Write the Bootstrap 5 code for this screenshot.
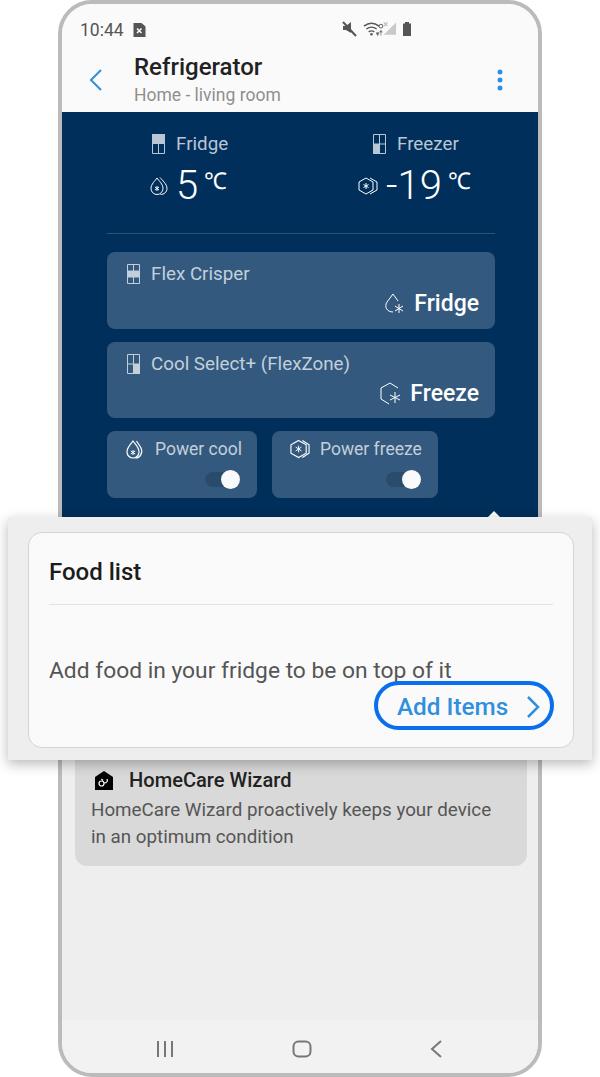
<!DOCTYPE html>
<html lang="en">
<head>
<meta charset="UTF-8">
<meta name="viewport" content="width=device-width, initial-scale=1.0">
<title>Refrigerator</title>
<link href="https://cdn.jsdelivr.net/npm/bootstrap@5.3.2/dist/css/bootstrap.min.css" rel="stylesheet">
<style>
html, body { margin: 0; height: 1077px; overflow: hidden; background: #fff; font-family: Roboto, "Liberation Sans", sans-serif; }
.stage { position: relative; width: 600px; height: 1077px; overflow: hidden; }
.phone { width: 484px; height: 1077px; margin-left: 58px; border: 4px solid #bbb; border-radius: 34px; background: #eee; overflow: hidden; }
.phone > * { flex-shrink: 0; }
.phone svg { flex-shrink: 0; }
.status-bar { height: 46px; padding: 16px 0 0 18px; background: #fafafa; color: #555; font-size: 17.500px; line-height: 20px; }
.sim-icon { margin: 3px 0 0 9px; }
.status-icons { margin: 1px 0 0 196px; gap: 5px; }
.app-bar { height: 62px; background: #fafafa; padding-left: 26px; }
.app-title { font-size: 24px; font-weight: 500; line-height: 26px; color: #222; margin-top: 4px; }
.app-sub { font-size: 17.500px; line-height: 22px; color: #8f8f8f; margin-top: 4px; }
.back-col { width: 46px; padding-top: 17px; }
.more-dots { margin: 18px 34px 0 0; }
.fridge-panel { height: 418px; background: #002f5b; padding: 0 43px 0 45px; }
.temp-row { height: 122px; border-bottom: 1px solid #2b5279; padding-top: 20px; }
.temp-col-a { width: 50%; padding-left: 45px; }
.temp-col-b { width: 50%; padding-left: 72px; }
.temp-label { font-size: 18.800px; line-height: 24px; color: #b9c6d3; gap: 11px; }
.temp-val { color: #fff; font-size: 40px; line-height: 48px; font-weight: 300; margin-top: 6px; }
.temp-val-a { margin-left: -2px; }
.temp-val-b { margin-left: -15px; }
.temp-val svg { margin-right: 8px; }
.temp-unit { font-size: 23px; line-height: 28px; align-self: flex-start; margin: 6px 0 0 6px; font-weight: 300; }
.zone-tile { height: 77px; margin-top: 13px; background: #335a7e; border-radius: 8px; padding: 10px 16px 0 20px; }
.zone-tile-first { margin-top: 18px; }
.zone-tile-short { height: 76px; }
.tile-label { font-size: 18.800px; line-height: 24px; color: #c3cfda; gap: 11px; white-space: nowrap; }
.tile-value { font-size: 23px; font-weight: 500; line-height: 28px; color: #fff; margin-top: 4px; gap: 10px; }
.tile-value-tight { gap: 8px; }
.power-row { gap: 15px; margin-top: 13px; }
.power-tile { height: 67px; background: #335a7e; border-radius: 8px; padding: 6px 10px 0 18px; }
.power-tile .tile-label { gap: 10px; font-size: 17.500px; }
.power-a { width: 150px; }
.power-b { width: 166px; }
.toggle-track { width: 35px; height: 15px; margin: 11px 7px 0 auto; border-radius: 8px; background: #2a4c6c; position: relative; }
.toggle-knob { position: absolute; right: 0; top: -2px; width: 19px; height: 19px; border-radius: 50%; background: #fafafa; }
.wizard-card { height: 126px; margin: 210px 11px 0 13px; background: #d9d9d9; border-radius: 0 0 12px 12px; padding: 27px 16px 0 16px; }
.wizard-title { font-size: 20.100px; line-height: 26px; font-weight: 500; color: #222; gap: 16px; padding-left: 4px; }
.wizard-text { font-size: 18.800px; line-height: 27px; color: #555; margin-top: 4px; }
.bottom-nav { height: 53px; margin-top: 154px; padding-top: 5px; background: #f2f2f2; gap: 118px; }
.overlay-box { position: absolute; left: 8px; top: 517px; width: 584px; height: 243px; background: #eee; box-shadow: 0 4px 12px rgba(0,0,0,.28); padding: 15px 18px 0 20px; }
.food-card { height: 216px; background: #fafafa; border: 1px solid #d4d4d4; border-radius: 14px; padding: 20px 20px 0 20px; position: relative; }
.food-title { font-size: 24px; line-height: 38px; font-weight: 500; color: #1c1c1c; padding-bottom: 13px; border-bottom: 1px solid #e2e2e2; }
.food-text { font-size: 22.800px; line-height: 30px; color: #555; margin-top: 51px; }
.add-pill { position: absolute; left: 345px; top: 148px; width: 180px; height: 49px; border: 4px solid #0a6fec; border-radius: 25px; padding: 3px 0 0 19px; font-size: 24.300px; font-weight: 500; color: #3090dd; gap: 18px; }
.peek { position: absolute; left: 487px; top: 511px; }
</style>
</head>
<body>
<div class="stage">
  <div class="phone d-flex flex-column">
    <div class="status-bar d-flex">
      <span>10:44</span>
      <svg class="sim-icon" width="13" height="14" viewBox="0 0 12 14"><path d="M0 0h8l4 3.500V14H0z" fill="#555"/><path d="M3.500 5.500l4.500 4.500M8 5.500L3.500 10" stroke="#fafafa" stroke-width="1.600"/></svg>
      <div class="status-icons d-flex align-items-start">
        <svg width="16" height="16" viewBox="0 0 16 16"><path d="M1 5h3l5-4v11l-5-3H1z" fill="#555"/><path d="M1 1l13 14" stroke="#555" stroke-width="2"/></svg>
        <svg width="34" height="16" viewBox="0 0 36 16"><path d="M1 5q8-6 16 0M3.500 8q5.500-4 11 0M6 11q3-2 6 0" fill="none" stroke="#555" stroke-width="1.500"/><circle cx="9" cy="13.500" r="1.300" fill="#555"/><path d="M14 12h3l-1.500 3zM19 15v-5M17.500 11.500l1.500-2 1.500 2" fill="#555" stroke="#777" stroke-width=".8"/><circle cx="19" cy="5" r="2" fill="none" stroke="#555"/><path d="M22 1l4 4M26 1l-4 4" stroke="#bbb" stroke-width="1.300"/><path d="M35 1v13H22z" fill="#c9c9c9"/></svg>
        <svg width="10" height="16" viewBox="0 0 10 16"><path d="M3 1h4v1.500h2V15H1V2.500h2z" fill="#555"/></svg>
      </div>
    </div>
    <div class="app-bar d-flex">
      <div class="back-col">
        <svg width="16" height="24" viewBox="0 0 16 24"><path d="M13 2L3 12l10 10" fill="none" stroke="#2f8fdf" stroke-width="2"/></svg>
      </div>
      <div class="flex-grow-1">
        <div class="app-title">Refrigerator</div>
        <div class="app-sub">Home - living room</div>
      </div>
      <svg class="more-dots" width="8" height="24" viewBox="0 0 8 24"><circle cx="4" cy="4" r="2.500" fill="#2f8fdf"/><circle cx="4" cy="12" r="2.500" fill="#2f8fdf"/><circle cx="4" cy="20" r="2.500" fill="#2f8fdf"/></svg>
    </div>

    <div class="fridge-panel">
      <div class="temp-row d-flex">
        <div class="temp-col-a">
          <div class="temp-label d-flex align-items-center">
            <svg width="13" height="20" viewBox="0 0 13 20"><path d="M.5.500h12v19H.5z" fill="none" stroke="#b9c6d3"/><path d="M0 0h13v10H0z" fill="#b9c6d3"/><path d="M6.500 10v10" stroke="#b9c6d3"/></svg>
            <span>Fridge</span>
          </div>
          <div class="temp-val temp-val-a d-flex align-items-center">
            <svg width="18" height="20" viewBox="0 0 18 20"><path d="M7 2C5 5 1 8 1 12.500a6 6 0 0 0 12 0C13 8 9 5 7 2z" fill="none" stroke="#fff"/><path d="M10 1.500C12 4 17 8 17 12.500c0 3.500-3 6-6.500 6" fill="none" stroke="#fff"/><path d="M7 10v5M5 11l4 3M9 11l-4 3" stroke="#fff"/></svg>
            <span>5</span><span class="temp-unit">℃</span>
          </div>
        </div>
        <div class="temp-col-b">
          <div class="temp-label d-flex align-items-center">
            <svg width="13" height="20" viewBox="0 0 13 20"><path d="M.5.500h12v19H.5zM6.500 0v20M0 10h13" fill="none" stroke="#b9c6d3"/><path d="M0 10h6.500v10H0z" fill="#b9c6d3"/></svg>
            <span>Freezer</span>
          </div>
          <div class="temp-val temp-val-b d-flex align-items-center">
            <svg width="20" height="18" viewBox="0 0 20 18"><path d="M8 1l7 4v8l-7 4-7-4V5z" fill="none" stroke="#fff"/><path d="M12 1l7 4v8l-7 4" fill="none" stroke="#fff"/><path d="M8 6v6M5.500 7.500l5 3M10.500 7.500l-5 3" stroke="#fff"/></svg>
            <span>-19</span><span class="temp-unit">℃</span>
          </div>
        </div>
      </div>

      <div class="zone-tile zone-tile-first">
        <div class="tile-label d-flex align-items-center">
          <svg width="13" height="20" viewBox="0 0 13 20"><path d="M.5.500h12v19H.5zM6.500 0v7M6.500 13v7M0 7h13M0 13h13" fill="none" stroke="#c3cfda"/><path d="M0 7h13v6H0z" fill="#c3cfda"/></svg>
          <span>Flex Crisper</span>
        </div>
        <div class="tile-value d-flex justify-content-end align-items-center">
          <svg width="20" height="22" viewBox="0 0 20 22"><path d="M9 1l5 7M9 1L3 9c-3 5 0 10 6 10" fill="none" stroke="#fff"/><path d="M15 11v9M11 13l8 5M19 13l-8 5" stroke="#fff"/></svg>
          <span>Fridge</span>
        </div>
      </div>
      <div class="zone-tile zone-tile-short">
        <div class="tile-label d-flex align-items-center">
          <svg width="13" height="20" viewBox="0 0 13 20"><path d="M.5.500h12v19H.5zM6.500 0v20M0 10h13" fill="none" stroke="#c3cfda"/><path d="M6.500 10H13v10H6.500z" fill="#c3cfda"/></svg>
          <span>Cool Select+ (FlexZone)</span>
        </div>
        <div class="tile-value tile-value-tight d-flex justify-content-end align-items-center">
          <svg width="24" height="24" viewBox="0 0 22 24"><path d="M19 6l-8-5-9 5v11l8 5" fill="none" stroke="#fff"/><path d="M16 10v11M11 13l10 5M21 13l-10 5" stroke="#fff"/></svg>
          <span>Freeze</span>
        </div>
      </div>

      <div class="power-row d-flex">
        <div class="power-tile power-a">
          <div class="tile-label d-flex align-items-center">
            <svg width="20" height="21" viewBox="0 0 19 21"><path d="M7.500 2C5.500 5 1.500 8 1.500 13a6 6 0 0 0 12 0C13.500 8 9.500 5 7.500 2z" fill="none" stroke="#fff" stroke-width="1.200"/><path d="M11 2l4 6c3 5 0 11-5 11" fill="none" stroke="#fff" stroke-width="1.200"/><path d="M7.500 11v5M5.300 12l4.400 3M9.700 12l-4.400 3" stroke="#fff"/></svg>
            <span>Power cool</span>
          </div>
          <div class="toggle-track"><div class="toggle-knob"></div></div>
        </div>
        <div class="power-tile power-b">
          <div class="tile-label d-flex align-items-center">
            <svg width="20" height="20" viewBox="0 0 21 20"><path d="M9 1l8 4.500v9L9 19l-8-4.500v-9z" fill="none" stroke="#fff" stroke-width="1.200"/><path d="M13 1l7 4.500v9L13 19" fill="none" stroke="#fff" stroke-width="1.200"/><path d="M9 6.500v7M6 8l6 4M12 8l-6 4" stroke="#fff"/></svg>
            <span>Power freeze</span>
          </div>
          <div class="toggle-track"><div class="toggle-knob"></div></div>
        </div>
      </div>
    </div>

    <div class="wizard-card">
      <div class="wizard-title d-flex align-items-center">
        <svg width="18" height="19" viewBox="0 0 18 19"><path d="M9 0l9 6v13H0V6z" fill="#000"/><circle cx="6.500" cy="12.500" r="2.500" fill="none" stroke="#fff" stroke-width="1.200"/><path d="M9 12c3 0 4-2 3-4M6.500 8l1.500 1.500" fill="none" stroke="#fff" stroke-width="1.200"/></svg>
        <span>HomeCare Wizard</span>
      </div>
      <div class="wizard-text">HomeCare Wizard proactively keeps your device<br>in an optimum condition</div>
    </div>

    <div class="bottom-nav d-flex justify-content-center align-items-center">
      <svg width="18" height="18" viewBox="0 0 18 18"><path d="M2 1v16M9 1v16M16 1v16" stroke="#777" stroke-width="2"/></svg>
      <svg width="20" height="18" viewBox="0 0 20 18"><rect x="1.500" y="1.500" width="17" height="15" rx="5" fill="none" stroke="#777" stroke-width="2"/></svg>
      <svg width="14" height="18" viewBox="0 0 14 18"><path d="M11 1L2 9l9 8" fill="none" stroke="#777" stroke-width="2"/></svg>
    </div>
  </div>

  <svg class="peek" width="14" height="8" viewBox="0 0 14 8"><path d="M7 0l6 6v2H1V6z" fill="#fafafa"/></svg>

  <div class="overlay-box">
    <div class="food-card">
      <div class="food-title">Food list</div>
      <div class="food-text">Add food in your fridge to be on top of it</div>
      <div class="add-pill d-flex align-items-center">
        <span>Add Items</span>
        <svg width="14" height="24" viewBox="0 0 14 24"><path d="M2 2l10 10L2 22" fill="none" stroke="#3090dd" stroke-width="2.500"/></svg>
      </div>
    </div>
  </div>
</div>
<script src="https://cdn.jsdelivr.net/npm/bootstrap@5.3.2/dist/js/bootstrap.bundle.min.js"></script>
</body>
</html>
